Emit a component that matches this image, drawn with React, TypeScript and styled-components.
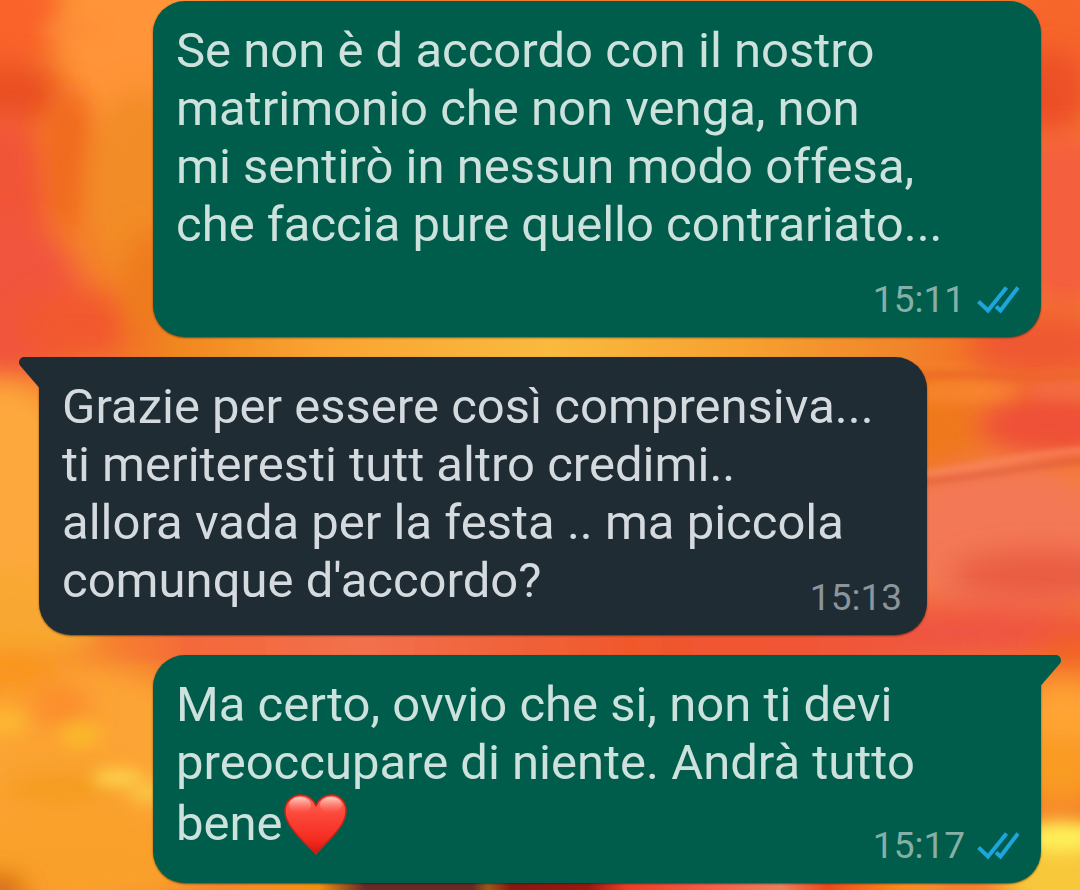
import React from "react";
import styled, { createGlobalStyle } from "styled-components";

type Side = "in" | "out";

const FILL = { in: "#1f2c34", out: "#005d4b" };
const INK = { in: "#d5dadf", out: "#cde1dd" };
const META = { in: "#8b959b", out: "#86b0a7" };

const GlobalStyle = createGlobalStyle`
  *, *::before, *::after { box-sizing: border-box; }
  body {
    margin: 0;
    font-family: Roboto, "Liberation Sans", sans-serif;
    background: #f27a2c;
  }
`;

const Screen = styled.main`
  position: relative;
  min-height: 100vh;
  overflow: hidden;
  padding: 1px 39px 7px;
`;

const WallpaperSvg = styled.svg`
  position: absolute;
  inset: 0;
  width: 100%;
  height: 100%;
`;

const Thread = styled.ol`
  position: relative;
  display: flex;
  flex-direction: column;
  gap: 20px;
  margin: 0;
  padding: 0;
  list-style: none;
`;

const Bubble = styled.li<{ $side: Side; $tail?: boolean }>`
  position: relative;
  display: flex;
  flex-direction: column;
  margin-left: ${(p) => (p.$side === "out" ? "114px" : "0")};
  margin-right: ${(p) => (p.$side === "in" ? "114px" : "0")};
  padding: 21px ${(p) => (p.$side === "out" ? "22px" : "25px")} 15px 23px;
  border-radius: 32px;
  border-top-left-radius: ${(p) => (p.$tail && p.$side === "in" ? "0" : "32px")};
  border-top-right-radius: ${(p) => (p.$tail && p.$side === "out" ? "0" : "32px")};
  color: ${(p) => INK[p.$side]};
  background: ${(p) => FILL[p.$side]};
  box-shadow: 0 1px 2px rgba(40, 20, 0, 0.6);
`;

const TailSvg = styled.svg<{ $side: Side }>`
  position: absolute;
  top: 0;
  left: ${(p) => (p.$side === "in" ? "-20px" : "auto")};
  right: ${(p) => (p.$side === "out" ? "-20px" : "auto")};
  width: 22px;
  height: 32px;
  fill: ${(p) => FILL[p.$side]};
  transform: ${(p) => (p.$side === "out" ? "scaleX(-1)" : "none")};
`;

const Text = styled.p`
  margin: 0;
  font-size: 49px;
  line-height: 58px;
  white-space: pre-line;
`;

/* The closing line of a message, with its time at the right end. */
const LastRow = styled.div`
  display: flex;
  align-items: flex-end;
  justify-content: space-between;

  ${Text} {
    margin-bottom: 10px;
  }
`;

const Meta = styled.div<{ $side: Side; $below?: boolean }>`
  display: flex;
  align-items: center;
  align-self: flex-end;
  flex-shrink: 0;
  gap: 12px;
  margin-top: ${(p) => (p.$below ? "24px" : "0")};
  font-size: 37px;
  line-height: 44px;
  color: ${(p) => META[p.$side]};
`;

const TicksSvg = styled.svg`
  width: 42px;
  height: 28px;
  fill: none;
  stroke: #1ea5dd;
  stroke-width: 4;
`;

const HeartSvg = styled.svg`
  width: 64px;
  height: 66px;
  vertical-align: -18px;
`;

const Tail = ({ side }: { side: Side }) => (
  <TailSvg $side={side} viewBox="0 0 22 32" aria-hidden="true">
    <path d="M22 0H5C1 0-1.500 5 1 8.500L20 30.500L22 32Z" />
  </TailSvg>
);

const Ticks = () => (
  <TicksSvg viewBox="0 0 42 28" role="img" aria-label="Letto">
    <path d="M1.500 15.500L11 24.500L29.500 1.500" />
    <path d="M19 20.500L23.500 24.500L41 1.500" />
  </TicksSvg>
);

const Heart = () => (
  <HeartSvg viewBox="0 -2 64 66" role="img" aria-label="Cuore rosso">
    <defs>
      <linearGradient id="heartBody" x1="0" y1="0" x2="0" y2="1">
        <stop offset="0" stopColor="#ff6a58" />
        <stop offset="0.35" stopColor="#fb4638" />
        <stop offset="0.75" stopColor="#f52c20" />
        <stop offset="1" stopColor="#cf1710" />
      </linearGradient>
      <linearGradient id="heartShine" x1="0" y1="0" x2="0" y2="1">
        <stop offset="0" stopColor="#ffe0dc" stopOpacity="0.85" />
        <stop offset="1" stopColor="#ff8a7c" stopOpacity="0" />
      </linearGradient>
    </defs>
    <path
      d="M33 60C27 54 19 47 11 37C5 30 2 24 2 17C2 8 9 1 18 1C25 1 30 5 33 12C36 5 41 1 48 1C57 1 63 8 63 17C63 24 60 30 54 37C46 47 38 54 33 60Z"
      fill="url(#heartBody)"
      stroke="#c3261b"
      strokeWidth="1.500"
      strokeLinejoin="round"
    />
    <ellipse cx="17" cy="11" rx="11" ry="8" fill="url(#heartShine)" />
    <ellipse cx="48" cy="11" rx="11" ry="8" fill="url(#heartShine)" />
  </HeartSvg>
);

/* Colour patches of the painted backdrop: x, y, rx, ry, colour. */
const PATCHES: [number, number, number, number, string][] = [
  [0, 10, 60, 70, "#fa6429"],
  [140, 40, 80, 110, "#ff9438"],
  [10, 95, 50, 34, "#ea5020"],
  [0, 190, 50, 80, "#f15538"],
  [70, 160, 24, 70, "#f0681e"],
  [140, 190, 56, 100, "#f28c28"],
  [10, 300, 70, 80, "#f1553c"],
  [80, 325, 60, 36, "#f2582e"],
  [150, 290, 30, 60, "#ee7c1c"],
  [0, 510, 90, 130, "#fda83c"],
  [0, 620, 100, 50, "#f8a832"],
  [60, 760, 160, 100, "#fca434"],
  [10, 670, 50, 20, "#f9941f"],
  [60, 705, 30, 20, "#fb8a2c"],
  [60, 790, 60, 22, "#f59c20"],
  [80, 860, 130, 50, "#f9a02c"],
  [0, 892, 24, 14, "#c45a0c"],
  [1060, 30, 50, 60, "#f6652a"],
  [1050, 95, 40, 45, "#ec5026"],
  [1065, 220, 55, 90, "#f45e3c"],
  [1040, 345, 80, 34, "#ef5832"],
  [925, 430, 60, 60, "#f0781a"],
  [1050, 425, 72, 34, "#ee5038"],
  [1000, 540, 120, 80, "#f37854"],
  [1040, 575, 90, 24, "#e95c42"],
  [960, 632, 170, 28, "#ef5442"],
  [1070, 652, 30, 14, "#f2601e"],
  [1065, 720, 50, 40, "#ffa434"],
  [1060, 770, 46, 34, "#f99c20"],
  [1060, 875, 60, 50, "#f8c83a"],
];

/* Small bright spots laid over the patches. */
const GLINTS: [number, number, number, number, string][] = [
  [80, 735, 22, 12, "#fbb82c"],
  [118, 778, 26, 8, "#fdd850"],
  [148, 792, 20, 10, "#fbc844"],
  [4, 722, 24, 12, "#fcb830"],
  [70, 30, 30, 5, "#fd8a38"],
  [960, 393, 60, 6, "#fb8c34"],
  [1060, 388, 30, 8, "#f56a48"],
  [1062, 838, 44, 14, "#fff058"],
];

const Wallpaper = () => (
  <WallpaperSvg viewBox="0 0 1080 890" preserveAspectRatio="none" aria-hidden="true">
    <defs>
      <filter id="soft" x="-100%" y="-100%" width="300%" height="300%">
        <feGaussianBlur stdDeviation="14" />
      </filter>
      <filter id="glint" x="-100%" y="-200%" width="300%" height="500%">
        <feGaussianBlur stdDeviation="8" />
      </filter>
      <filter id="streak" x="-20%" y="-100%" width="140%" height="300%">
        <feGaussianBlur stdDeviation="3" />
      </filter>
      <linearGradient id="upperBand">
        <stop offset="0" stopColor="#f2622a" stopOpacity="0" />
        <stop offset="0.08" stopColor="#f0861e" />
        <stop offset="0.25" stopColor="#f9a432" />
        <stop offset="0.5" stopColor="#f9ba3e" />
        <stop offset="0.72" stopColor="#f6a030" />
        <stop offset="0.9" stopColor="#f0842a" />
        <stop offset="1" stopColor="#f0641c" stopOpacity="0" />
      </linearGradient>
      <linearGradient id="middleBand">
        <stop offset="0" stopColor="#f97838" stopOpacity="0" />
        <stop offset="0.1" stopColor="#f4683a" />
        <stop offset="0.3" stopColor="#f2704c" />
        <stop offset="0.6" stopColor="#f0582c" />
        <stop offset="0.85" stopColor="#f05638" />
        <stop offset="1" stopColor="#ef5442" stopOpacity="0" />
      </linearGradient>
      <linearGradient id="lowerBand">
        <stop offset="0" stopColor="#f99c2c" stopOpacity="0" />
        <stop offset="0.18" stopColor="#f0900e" />
        <stop offset="0.24" stopColor="#6a2a28" />
        <stop offset="0.38" stopColor="#6a2a28" />
        <stop offset="0.4" stopColor="#9a5a18" />
        <stop offset="0.43" stopColor="#8a1810" />
        <stop offset="0.53" stopColor="#9a1810" />
        <stop offset="0.58" stopColor="#ee3e24" />
        <stop offset="0.7" stopColor="#f8604a" />
        <stop offset="0.78" stopColor="#e8805c" />
        <stop offset="0.84" stopColor="#f04818" />
        <stop offset="0.92" stopColor="#f98018" />
        <stop offset="1" stopColor="#fbb026" stopOpacity="0" />
      </linearGradient>
    </defs>
    <rect width="1080" height="890" fill="#f57f2e" />
    {PATCHES.map(([x, y, rx, ry, fill], i) => (
      <ellipse key={i} cx={x} cy={y} rx={rx} ry={ry} fill={fill} filter="url(#soft)" />
    ))}
    {GLINTS.map(([x, y, rx, ry, fill], i) => (
      <ellipse key={i} cx={x} cy={y} rx={rx} ry={ry} fill={fill} filter="url(#glint)" />
    ))}
    <g filter="url(#streak)" fill="none" strokeWidth="5">
      <path d="M920 474C970 470 1030 452 1090 450" stroke="#fb8660" />
      <path d="M920 482C970 478 1030 466 1090 460" stroke="#e2603e" />
      <path d="M920 376C980 370 1030 384 1090 374" stroke="#ea6428" />
    </g>
    <rect x="100" y="325" width="900" height="36" fill="url(#upperBand)" />
    <g filter="url(#streak)">
      <rect x="100" y="628" width="880" height="34" fill="url(#middleBand)" />
    </g>
    <rect x="180" y="876" width="770" height="14" fill="url(#lowerBand)" />
  </WallpaperSvg>
);

export default function App() {
  return (
    <>
      <GlobalStyle />
      <Screen>
        <Wallpaper />
        <Thread>
          <Bubble $side="out">
            <Text>
              {"Se non è d accordo con il nostro\nmatrimonio che non venga, non\nmi sentirò in nessun modo offesa,\nche faccia pure quello contrariato..."}
            </Text>
            <Meta $side="out" $below>
              <time>15:11</time>
              <Ticks />
            </Meta>
          </Bubble>
          <Bubble $side="in" $tail>
            <Tail side="in" />
            <Text>
              {"Grazie per essere così comprensiva...\nti meriteresti tutt altro credimi..\nallora vada per la festa .. ma piccola"}
            </Text>
            <LastRow>
              <Text>comunque d'accordo?</Text>
              <Meta $side="in">
                <time>15:13</time>
              </Meta>
            </LastRow>
          </Bubble>
          <Bubble $side="out" $tail>
            <Tail side="out" />
            <Text>
              {"Ma certo, ovvio che si, non ti devi\npreoccupare di niente. Andrà tutto"}
            </Text>
            <LastRow>
              <Text>
                bene
                <Heart />
              </Text>
              <Meta $side="out">
                <time>15:17</time>
                <Ticks />
              </Meta>
            </LastRow>
          </Bubble>
        </Thread>
      </Screen>
    </>
  );
}
